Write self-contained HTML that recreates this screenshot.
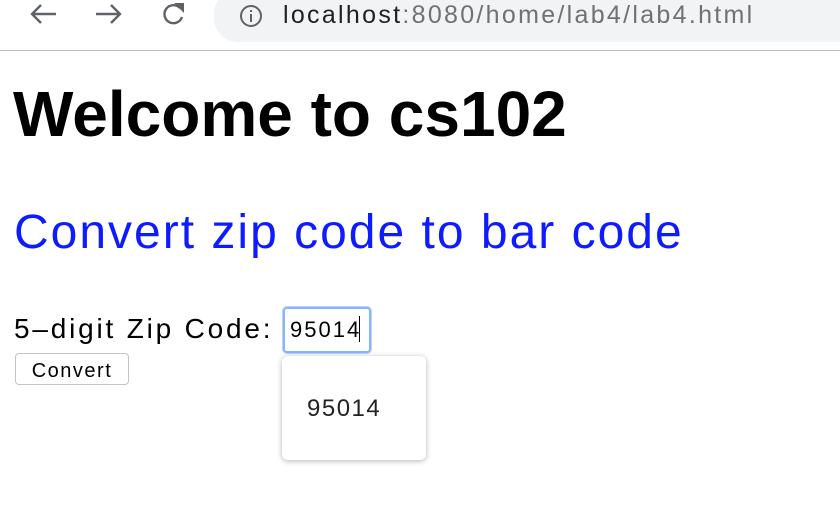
<!DOCTYPE html>
<html><head><meta charset="utf-8"><style>
body{margin:0;width:840px;height:524px;background:#fff;position:relative;overflow:hidden;font-family:"Liberation Sans",sans-serif}
.a{position:absolute;white-space:nowrap}
</style></head><body>
<div class="a" style="left:0;top:50px;width:840px;height:1px;background:#bdbdbd"></div>
<div class="a" style="left:214px;top:-10px;width:700px;height:52px;background:#f1f3f4;border-radius:24px"></div>
<svg class="a" style="left:24px;top:0" width="180" height="30" viewBox="0 0 180 30">
<g fill="none" stroke="#5f6368" stroke-width="2.4">
<path d="M32 14H8M17 5l-9 9 9 9"/>
<path d="M72 14h24M87 5l9 9-9 9"/>
<path d="M156 8a9 9 0 1 0 2 9"/>
</g><path d="M150 3h10v10z" fill="#5f6368"/>
</svg>
<svg class="a" style="left:238px;top:3px" width="26" height="26"><circle cx="13" cy="13" r="10" fill="none" stroke="#5f6368" stroke-width="2"/><rect x="12" y="11" width="2" height="8" fill="#5f6368"/><rect x="12" y="7" width="2" height="2" fill="#5f6368"/></svg>
<div class="a" style="left:283px;top:0;font-size:25px;letter-spacing:2.3px;line-height:30px;color:#202124">localhost<span style="color:#6e7275">:8080/home/lab4/lab4.html</span></div>
<div class="a" style="left:13px;top:76px;font-size:64px;font-weight:bold;line-height:76px">Welcome to cs102</div>
<div class="a" style="left:14px;top:206px;font-size:48px;letter-spacing:2px;line-height:54px;color:#0f1bff">Convert zip code to bar code</div>
<div class="a" style="left:14px;top:312px;font-size:28px;letter-spacing:2.8px;line-height:34px">5–digit Zip Code:</div>
<div class="a" style="left:283px;top:307px;width:84px;height:42px;border:2px solid #8ab5f5;border-radius:4px;box-shadow:0 0 0 1px #b9d3fa"></div>
<div class="a" style="left:290px;top:316px;font-size:22px;letter-spacing:2px;line-height:28px">95014<span style="display:inline-block;width:1px;height:26px;background:#000;vertical-align:-5px;margin-left:-2px"></span></div>
<div class="a" style="left:15px;top:353px;width:112px;height:30px;border:1px solid #c3c3c3;border-radius:4px;background:#fff;font-size:20px;letter-spacing:1.5px;line-height:34px;text-align:center">Convert</div>
<div class="a" style="left:282px;top:356px;width:144px;height:104px;background:#fff;border-radius:6px;box-shadow:0 1px 6px rgba(0,0,0,.3)"></div>
<div class="a" style="left:307px;top:394px;font-size:24px;letter-spacing:1.5px;line-height:30px;color:#222">95014</div>
</body></html>
